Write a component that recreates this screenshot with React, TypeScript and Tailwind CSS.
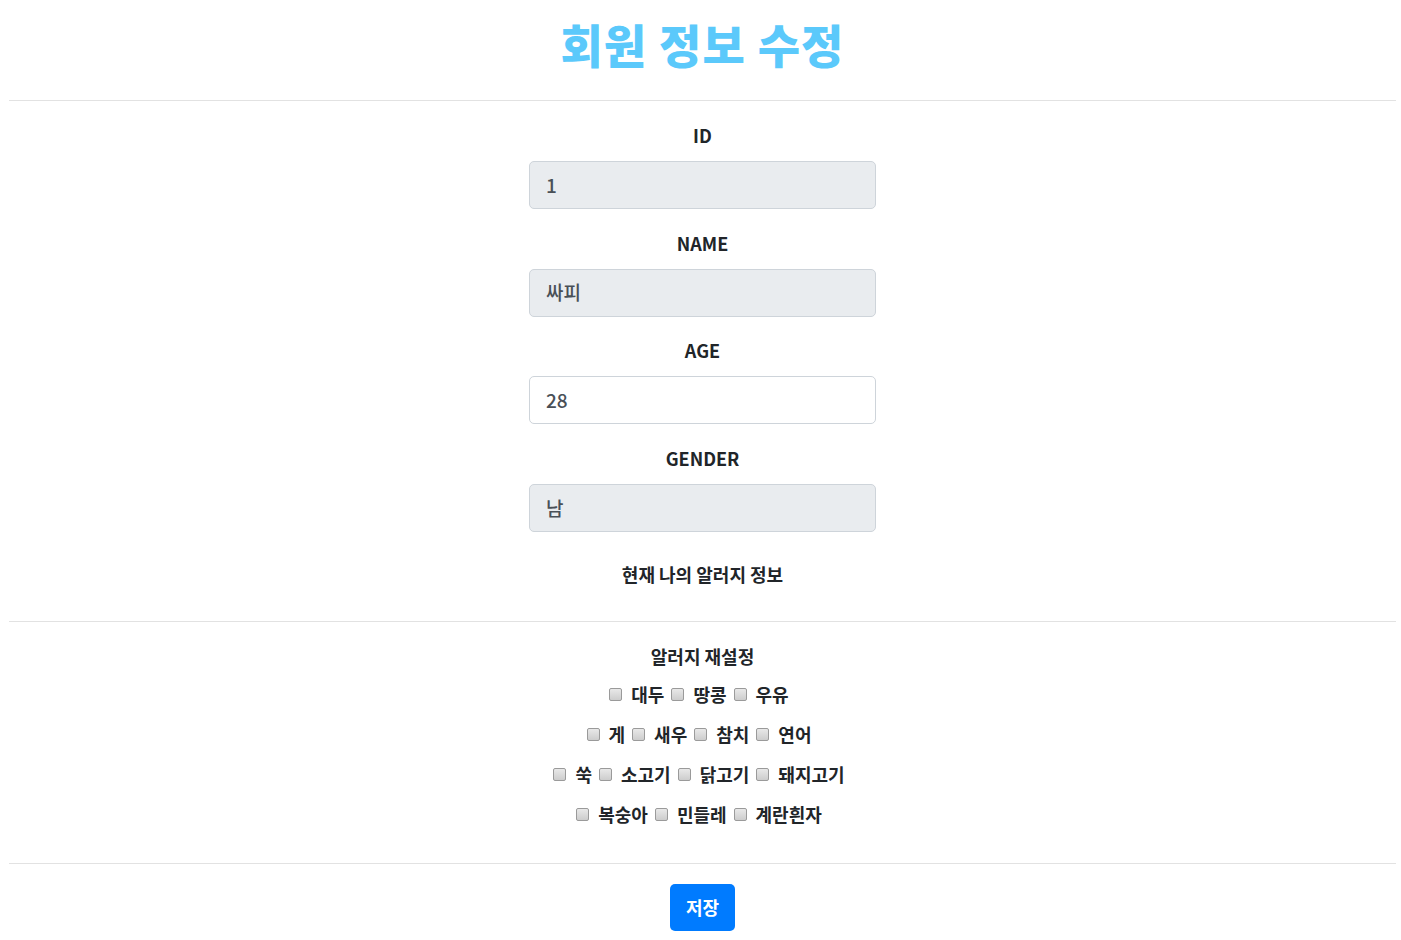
import React from 'react';

const font = "font-['Noto_Sans_CJK_KR','Noto_Sans',sans-serif]";

const allergyRows: string[][] = [
  ['대두', '땅콩', '우유'],
  ['게', '새우', '참치', '연어'],
  ['쑥', '소고기', '닭고기', '돼지고기'],
  ['복숭아', '민들레', '계란흰자'],
];

const Field: React.FC<{ label: string; value: string; readOnly?: boolean }> = ({ label, value, readOnly }) => (
  <div className="flex flex-col items-center">
    <label className="h-6 leading-6 text-[18px] font-bold text-[#212529]">{label}</label>
    <div
      className={`mt-[14px] w-[347px] h-12 flex items-center px-4 rounded-[5px] border border-[#ced4da] text-[19px] font-medium text-[#495057] ${
        readOnly ? 'bg-[#e9ecef]' : 'bg-white'
      }`}
    >
      {value}
    </div>
  </div>
);

const Check: React.FC<{ label: string }> = ({ label }) => (
  <span className="inline-flex items-center">
    <span className="w-[13px] h-[13px] rounded-[2px] border border-[#9a9a9a] bg-gradient-to-b from-[#e8e8e8] to-[#cdcdcd]" />
    <span className="ml-[9px] mr-[7px] text-[18px] font-bold text-[#212529]">{label}</span>
  </span>
);

export default function App() {
  return (
    <div className={`${font} bg-white min-h-[940px] pl-[9px] pr-[5px]`}>
      <h1 className="h-[100px] flex items-center justify-center pb-[14px] text-[46px] font-black text-[#5bc9fb] tracking-wide">
        회원 정보 수정
      </h1>
      <hr className="border-t border-[#e2e2e2]" />

      <div className="pt-[22px] flex flex-col gap-[21.6px]">
        <Field label="ID" value="1" readOnly />
        <Field label="NAME" value="싸피" readOnly />
        <Field label="AGE" value="28" />
        <Field label="GENDER" value="남" readOnly />
      </div>

      <p className="mt-[30px] h-6 leading-6 text-center text-[18px] font-bold text-[#212529]">현재 나의 알러지 정보</p>
      <hr className="mt-[35px] border-t border-[#e2e2e2]" />

      <p className="mt-[22px] h-6 leading-6 text-center text-[18px] font-bold text-[#212529]">알러지 재설정</p>
      <div className="mt-[7px] flex flex-col items-center">
        {allergyRows.map((row, i) => (
          <div key={i} className="h-10 flex items-center justify-center">
            {row.map((a) => (
              <Check key={a} label={a} />
            ))}
          </div>
        ))}
      </div>

      <hr className="mt-[28px] border-t border-[#e2e2e2]" />
      <div className="pt-5 flex justify-center">
        <button className="w-[65px] h-[47px] rounded-[5px] bg-[#007bff] text-white text-[18px] font-bold">저장</button>
      </div>
    </div>
  );
}
